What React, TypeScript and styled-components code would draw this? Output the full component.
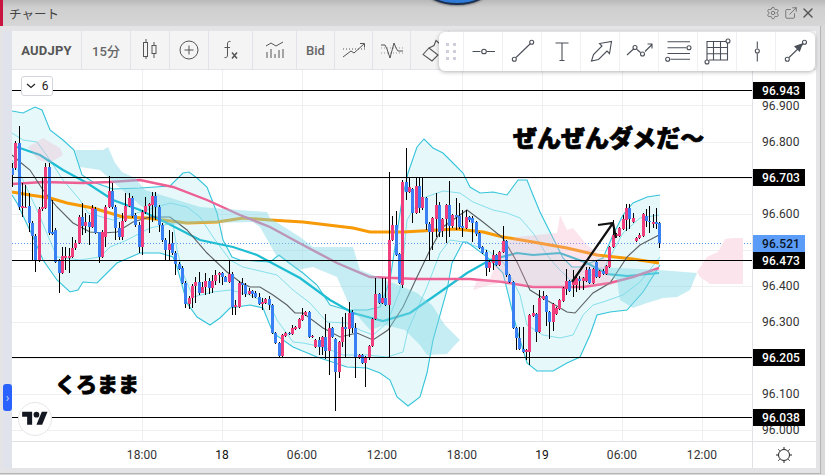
import React from "react";
import styled, { createGlobalStyle } from "styled-components";
import { ExternalLink, Settings, X } from "lucide-react";

const GlobalStyle = createGlobalStyle`
    html, body {
        margin: 0;
        padding: 0;
        overflow: hidden;
        background: #dcdcdc;
    }
    * {
        box-sizing: border-box;
    }
`;

// up(1)/down(0), body top, body bottom, wick top, wick bottom (all in page pixels)
type Candle = [number, number, number, number, number];
type Chunk = { start: number; rows: Candle[] };

const chunks: Chunk[] = [
    {
        start: 12,
        rows: [
            [0,168,175,163,187],[1,143,168,141,170],[0,143,207,126,210],[1,206,208,183,217],[1,207,208,185,208],
            [0,206,223,193,232],[0,223,236,221,260],[0,236,261,234,272],[1,209,261,207,262],[1,207,209,178,211],
            [1,167,208,163,209],[0,167,233,163,235],[0,232,234,200,235],[0,230,262,228,263],[0,261,273,259,293],
            [1,256,273,247,274],[1,256,258,247,270],[1,256,258,248,273],[1,248,257,237,258],[1,243,248,240,250],
            [1,217,243,215,244],[0,217,226,203,235],[1,222,226,213,233],[0,222,227,215,245],[1,208,227,205,228],
            [0,209,233,207,234],[0,232,257,232,263],[1,232,257,230,258],[1,207,237,205,247],[1,191,207,176,208],
            [0,191,207,183,209],[0,207,228,205,240],[0,228,237,222,240],[1,221,237,213,240],[1,206,221,193,222],
            [1,198,206,193,207],[0,198,216,196,218],[0,215,225,213,227],[0,225,247,222,253],[1,212,247,210,255],
            [1,206,212,197,214],[1,204,206,203,233],[1,196,205,192,222],[0,196,207,192,220],[0,207,225,205,232],
            [0,225,240,223,242],[0,240,250,238,260],[1,244,250,230,260],[0,243,253,232,255],
        ],
    },
    {
        start: 175.3,
        rows: [
            [0,253,264,251,275],[0,264,269,262,270],[0,268,283,266,284],[0,283,304,281,308],[1,298,304,296,309],
            [1,286,298,284,308],[1,282,286,277,303],[0,282,293,272,295],[1,287,293,282,292],[1,281,287,273,295],
            [0,281,288,278,294],[1,281,288,275,293],[1,275,281,270,285],[1,273,275,272,283],[0,273,277,272,285],
            [0,277,282,276,282],[1,274,282,260,283],[0,274,307,272,315],[1,305,307,300,315],[1,283,307,281,308],
            [0,283,285,278,295],[0,285,294,283,297],[1,291,294,288,295],[0,291,294,290,298],[0,293,297,291,298],
            [0,297,304,293,305],[1,302,304,298,310],[1,299,303,298,304],[0,299,305,296,310],[0,305,333,304,334],
            [0,333,343,332,344],[0,343,356,342,357],[1,335,356,334,357],[1,333,336,332,337],[0,333,334,332,335],
            [1,328,334,325,335],[1,327,329,326,330],[1,319,328,318,329],[1,315,320,308,321],[1,312,315,311,316],
            [0,312,337,311,338],[1,336,337,335,338],[1,340,347,339,348],[0,340,347,337,355],[1,337,347,336,355],
            [0,337,351,314,359],[1,328,351,323,375],[0,328,337,327,338],[0,339,372,338,411],[1,342,372,341,378],
            [1,327,342,317,347],[0,327,329,313,357],[1,313,329,302,337],[0,312,328,310,333],[0,328,358,323,378],
            [1,355,358,354,359],[0,355,363,354,364],[1,357,363,356,387],[1,346,358,345,360],[1,319,346,318,347],
            [1,294,319,278,320],[0,294,303,293,304],[1,298,303,278,304],[0,298,305,278,306],
        ],
    },
    {
        start: 389,
        rows: [
            [1,240,305,172,358],[1,225,240,216,241],[0,225,255,211,256],[0,254,283,253,284],[1,182,285,180,288],
            [0,182,192,148,200],[1,187,192,178,193],[0,189,213,188,223],[1,186,213,177,214],[0,186,208,177,213],
            [1,197,208,177,210],[0,198,224,197,230],[0,224,232,222,260],[1,218,232,217,250],[1,205,219,193,237],
            [0,205,232,202,237],[1,219,231,218,237],[1,205,219,204,243],[0,205,226,181,237],[1,215,226,214,228],
            [0,215,217,198,230],[0,216,227,203,229],[0,226,228,210,237],[1,217,228,210,229],[0,217,220,216,222],
            [0,218,223,216,242],[0,222,234,221,236],[0,233,248,232,249],[0,247,253,246,254],[0,252,268,250,276],
            [1,262,268,261,272],
        ],
    },
    {
        start: 492.7,
        rows: [
            [1,255,263,250,270],[0,255,265,254,266],[1,252,265,251,266],[1,241,252,226,253],[0,241,275,240,277],
            [0,275,282,274,283],[0,282,328,281,329],[0,328,338,327,350],[0,338,349,327,350],[0,349,352,327,353],
            [1,350,352,349,360],[1,315,352,314,365],[1,313,316,305,317],[0,314,332,313,342],[1,298,332,290,333],
            [1,296,299,291,300],[0,296,312,295,326],[0,312,322,311,339],[1,304,322,303,331],[1,308,314,307,315],
            [1,300,309,299,310],[1,288,301,287,302],[1,281,289,269,295],[0,281,291,280,292],[1,280,285,270,297],
            [1,278,285,277,292],[0,279,281,276,290],[1,278,281,277,290],[1,270,281,267,282],[0,269,283,267,284],
            [1,269,283,268,284],[0,262,277,261,278],[1,271,277,270,278],[0,271,274,269,275],[1,266,274,265,275],
            [1,247,267,246,268],[1,235,247,220,248],[1,234,236,233,237],[1,228,236,227,237],[1,219,229,215,230],
            [1,208,220,204,231],[0,208,219,204,229],[1,218,222,213,223],[1,238,241,237,242],[1,235,238,233,239],
            [1,214,236,213,237],[0,216,221,209,227],[0,221,222,206,233],[1,222,224,214,228],[0,222,224,208,229],
            [0,223,243,222,248],
        ],
    },
];

const bandUpper = "12,111 23,113 35,107 42,110 50,130 63,140 74,150 82,175 93,182 113,189 140,188 170,186 183,173 189,172 197,178 207,187 217,213 223,240 232,257 240,260 270,262 279,255 288,262 303,273 317,285 330,305 347,310 367,310 380,307 390,280 402,200 408,173 417,147 424,139 433,148 443,153 453,163 463,173 470,187 480,193 493,192 507,195 518,180 527,180 533,195 540,212 553,238 563,258 572,267 580,267 590,263 603,258 613,235 623,215 633,203 647,197 660,195";
const bandLower = "660,265 643,292 627,310 610,312 597,315 590,335 580,357 567,363 553,371 537,371 527,363 517,330 512,310 503,273 487,257 467,242 463,242 452,263 447,290 433,340 427,373 420,397 408,406 397,397 390,380 380,373 367,368 347,367 317,357 293,347 273,333 263,308 250,305 230,308 220,318 210,325 197,317 187,303 177,267 173,257 160,253 140,253 117,263 107,273 97,283 83,282 78,290 70,292 57,280 43,260 33,237 17,203 12,195";
const innerUpper = "12,133 23,140 37,142 50,160 63,180 80,200 88,213 113,220 140,212 170,203 187,207 200,217 213,237 230,260 243,267 277,275 293,290 310,303 327,322 347,323 360,330 373,335 387,323 400,290 407,220 413,210 423,198 443,191 460,193 473,202 493,210 507,213 520,218 533,233 547,255 557,267 570,280 587,277 603,270 623,233 640,218 659,215";
const innerLower = "12,160 23,180 37,210 57,257 80,260 100,257 110,247 127,240 150,228 173,223 177,250 183,273 193,297 213,292 230,290 250,295 270,305 277,320 293,342 303,343 323,347 343,355 367,355 387,357 403,352 408,330 427,287 440,253 450,240 463,242 487,250 503,262 520,295 527,325 543,335 560,338 573,335 583,315 593,305 603,302 623,295 640,282 660,257";
const maThin = "12,155 20,162 30,170 43,190 57,207 73,223 90,232 103,233 117,232 133,222 150,217 170,217 187,230 207,253 227,272 240,282 250,287 260,287 273,295 287,305 295,313 303,313 323,328 340,337 357,333 373,340 388,330 403,307 417,277 430,250 443,227 467,210 483,222 503,238 517,262 530,290 543,298 567,312 575,313 593,293 610,283 627,257 640,245 659,235";
const maOrange = "12,192 30,195 50,198 67,203 93,208 123,217 147,218 187,223 217,222 243,218 270,220 303,222 353,228 370,232 403,232 457,229 483,232 503,237 533,242 550,245 567,248 597,255 633,259 659,263";
const maPink = "12,184 43,182 83,183 110,182 140,180 173,187 207,200 240,215 270,227 303,245 337,263 370,277 417,279 470,279 503,282 533,287 583,287 610,283 633,277 659,268";
const maTeal = "17,147 40,155 63,170 87,183 113,200 140,210 167,223 200,240 233,247 257,255 270,262 300,278 330,300 353,313 383,321 410,313 443,290 467,273 490,260 517,253 533,255 560,253 587,263 607,274 627,276 659,273";

const cloudBlue = "75,150 103,150 108,147 115,163 122,172 135,178 145,190 200,207 267,212 270,218 300,237 313,247 353,247 360,270 403,287 417,293 432,305 445,325 460,340 455,345 447,354 427,355 420,345 405,330 385,325 370,330 350,307 337,277 313,267 297,270 280,257 277,257 260,227 253,222 210,223 167,225 140,205 113,182 100,170 80,167";
const cloudBlueRight = "597,267 659,270 697,273 690,290 677,297 663,298 647,303 633,308 620,300 617,280";
const cloudPinkLeft = "28,147 43,138 60,148 63,155 50,163 38,160";
const cloudPinkMid = "473,290 477,280 490,279 503,243 517,237 537,235 557,233 560,215 567,230 573,228 587,245 607,260 612,285 560,287 533,287 503,282 490,285";
const cloudPinkRight = "697,272 707,257 718,252 725,239 733,238 743,238 743,284 710,284 700,277";

const levelLines = [90.5, 177.5, 260.5, 357.5, 417.5];
const gridX = [142, 222, 302, 382, 462, 542, 622, 702];
const gridY = [105, 142, 178, 214, 250, 286, 322, 358, 394, 430];
// rows whose tick sits behind a price badge stay empty
const priceTicks = ["96.900", "96.800", "", "96.600", "", "96.400", "96.300", "", "96.100", "96.000"];
const priceBadges = [
    { label: "96.943", y: 82, active: false },
    { label: "96.703", y: 169, active: false },
    { label: "96.521", y: 235, active: true },
    { label: "96.473", y: 252, active: false },
    { label: "96.205", y: 349, active: false },
    { label: "96.038", y: 409, active: false },
];
const timeLabels = [
    { label: "18:00", day: false },
    { label: "18", day: true },
    { label: "06:00", day: false },
    { label: "12:00", day: false },
    { label: "18:00", day: false },
    { label: "19", day: true },
    { label: "06:00", day: false },
    { label: "12:00", day: false },
];

function Candles() {
    return (
        <g>
            {chunks.map((chunk) =>
                chunk.rows.map(([up, top, bottom, high, low], i) => {
                    const x = Math.round(chunk.start + i * 3.333);
                    return (
                        <g key={`${chunk.start}-${i}`}>
                            <rect x={x} y={high} width={1} height={low - high} fill="#000" />
                            <rect x={x - 1} y={top} width={3} height={bottom - top} fill={up ? "#f03f7c" : "#3a80f5"} />
                        </g>
                    );
                })
            )}
        </g>
    );
}

function ChartDrawing() {
    return (
        <PlotSvg viewBox="12 70 740 371" width={740} height={371}>
            {gridX.map((x) => <line key={x} x1={x + 0.5} x2={x + 0.5} y1={70} y2={441} stroke="#efeff2" />)}
            {gridY.map((y) => <line key={y} x1={12} x2={752} y1={y + 0.5} y2={y + 0.5} stroke="#efeff2" />)}

            <polygon points={`${bandUpper} ${bandLower}`} fill="#e6f8fa" />
            <polyline points={innerUpper} fill="none" stroke="#86dfec" strokeWidth={1} />
            <polyline points={innerLower} fill="none" stroke="#86dfec" strokeWidth={1} />
            <polyline points={bandUpper} fill="none" stroke="#35c4da" strokeWidth={1.1} />
            <polyline points={bandLower} fill="none" stroke="#35c4da" strokeWidth={1.1} />

            <line x1={12} x2={752} y1={243.5} y2={243.5} stroke="#5b94ee" strokeDasharray="1 2" />
            <polyline points={maOrange} fill="none" stroke="#f79a06" strokeWidth={3} />
            <polyline points={maTeal} fill="none" stroke="#1fbdd3" strokeWidth={2.2} />
            <polyline points={maPink} fill="none" stroke="#ee5f94" strokeWidth={2.4} />
            <polyline points={maThin} fill="none" stroke="#5a5f60" strokeWidth={1.1} />

            {/* the clouds lie over the averages and dim them */}
            <polygon points={cloudPinkLeft} fill="#f3a9c6" opacity={0.28} />
            <polygon points={cloudBlue} fill="#7fd6e4" opacity={0.45} />
            <polygon points={cloudBlueRight} fill="#7fd6e4" opacity={0.45} />
            <polygon points={cloudPinkMid} fill="#f5a9c5" opacity={0.3} />
            <polygon points={cloudPinkRight} fill="#fce4ec" />

            <Candles />

            {levelLines.map((y) => <line key={y} x1={12} x2={752} y1={y} y2={y} stroke="#000" />)}

            <path d="M572 282 L613 223 M598 225 L613 223 L616 238" fill="none" stroke="#111" strokeWidth={2.2} />
        </PlotSvg>
    );
}

const iconProps = { fill: "none", stroke: "#555", strokeWidth: 1 };

function IconCandles() {
    return (
        <svg width="22" height="24" viewBox="0 0 22 24" {...iconProps}>
            <path d="M7 1v20M15 4v16" />
            <rect x="4.5" y="4.5" width="4" height="14" fill="#f4f4f4" />
            <rect x="13" y="7.5" width="4" height="8" fill="#f4f4f4" />
        </svg>
    );
}

function IconAdd() {
    return (
        <svg width="20" height="20" viewBox="0 0 20 20" {...iconProps}>
            <circle cx="10" cy="10" r="9" />
            <path d="M10 5.5v9M5.5 10h9" />
        </svg>
    );
}

function IconFx() {
    return (
        <svg width="18" height="20" viewBox="0 0 18 20" {...iconProps}>
            <path d="M8.5 1.5C6.5 1 5.5 2 5.5 4v11c0 2-1 3-3 2.5M2.5 7.5h5.5" />
            <path d="M10 12.5l5 6M15 12.5l-5 6" strokeWidth={1.5} />
        </svg>
    );
}

function IconIndicators() {
    return (
        <svg width="20" height="20" viewBox="0 0 20 20" {...iconProps}>
            <path d="M1 6l5-3 5 3 7-4" />
            <path d="M2 12v6M6 9v9M10 14v4M14 10v8M18 9v9" />
        </svg>
    );
}

function IconTrend() {
    return (
        <svg width="24" height="18" viewBox="0 0 24 18" {...iconProps}>
            <path d="M1 8h22" strokeDasharray="1 2" />
            <path d="M1 16l8-6 3 2 10-9M18 2.5h4.5v4" />
        </svg>
    );
}

function IconWave() {
    return (
        <svg width="24" height="20" viewBox="0 0 24 20" {...iconProps}>
            <path d="M1 8h22M1 13h22" strokeDasharray="1 2" stroke="#999" />
            <path d="M1 5h4l2 4 3 9 4-15 2 5 2 3h5" />
        </svg>
    );
}

function IconBrush() {
    return (
        <svg width="20" height="24" viewBox="0 0 20 24" {...iconProps}>
            <path d="M3 16.5l6-6.5 9 7-6 6z" strokeWidth={1.1} />
            <path d="M9 10l5-2.5 2-5 3.5 3" strokeWidth={1.1} />
        </svg>
    );
}

function IconSun() {
    return (
        <svg width="18" height="18" viewBox="0 0 18 18" fill="none" stroke="#222" strokeWidth="1">
            <circle cx="9" cy="9" r="5.5" />
            <path d="M9 1v2M9 15v2M1 9h2M15 9h2M3.3 3.3l1.4 1.4M13.3 13.3l1.4 1.4M3.3 14.7l1.4-1.4M13.3 4.7l1.4-1.4" />
        </svg>
    );
}

const toolStroke = { fill: "none", stroke: "#4a4f58", strokeWidth: 1.1 };

function ToolIcon({ children }: { children: React.ReactNode }) {
    return <svg width="39" height="39" viewBox="0 0 39 39" {...toolStroke}>{children}</svg>;
}

const drawingTools: React.ReactNode[] = [
    <ToolIcon key="h"><path d="M8.5 19.5h8M23 19.5h8" /><circle cx="20" cy="19.5" r="2.3" /></ToolIcon>,
    <ToolIcon key="line"><path d="M13 25.5l14-13.5" /><circle cx="11.3" cy="27.3" r="2" /><circle cx="28.7" cy="10.3" r="2" /></ToolIcon>,
    <ToolIcon key="text"><path d="M13.5 11h13M20 11v17.5M17.5 28.5h5" /></ToolIcon>,
    <ToolIcon key="arrow"><path d="M10.5 29l2-6.5 8.5-8.5-2.5-2.5 12-2-2 12-2.5-2.5-8.5 8.5z" /></ToolIcon>,
    <ToolIcon key="poly"><path d="M7 23l6.5-6M17 17.5l3.5 3M25 19.5l7-7M27.5 12h4.5v4.5" /><circle cx="15" cy="15.5" r="2" /><circle cx="22.5" cy="22" r="2" /></ToolIcon>,
    <ToolIcon key="channel"><path d="M8.5 9.7h22.5M8.5 15.7h19M8.5 21.5h22.5M11.5 27.3h19.5" /><circle cx="30" cy="15.7" r="2" /><circle cx="8.7" cy="27.3" r="2" /></ToolIcon>,
    <ToolIcon key="grid"><path d="M9 28V9.5h19M15.5 9.5V28M22.5 9.5V28M29.5 11v17H11M9 15.5h20.5M9 21.7h20.5" /><circle cx="30" cy="9" r="2" /><circle cx="9" cy="30" r="2" /></ToolIcon>,
    <ToolIcon key="vertical"><path d="M20.3 9.5v7M20.3 21.5v8" /><circle cx="20.3" cy="19" r="2" /></ToolIcon>,
    <ToolIcon key="ray"><path d="M13 25.5l14-13.5" /><circle cx="11.3" cy="27.3" r="2" /><circle cx="28.5" cy="10.3" r="2" /><path d="M26 12l-7 2.5 4.5 4.5z" fill="#4a4f58" /></ToolIcon>,
];

export default function App() {
    return (
        <Page>
            <GlobalStyle />
            <TitleBar>
                <TitleText>{"チャート"}</TitleText>
                <TitleActions>
                    <Settings size={14} strokeWidth={1.4} />
                    <ExternalLink size={14} strokeWidth={1.4} />
                    <X size={16} strokeWidth={2} />
                </TitleActions>
            </TitleBar>
            <BadgePeek />
            <Panel>
                <LeftRail>
                    <RailToggle>{"›"}</RailToggle>
                </LeftRail>
                <Content>
                    <Toolbar>
                        <ToolCell $w={70}><Symbol>{"AUDJPY"}</Symbol></ToolCell>
                        <ToolCell $w={49}><ToolLabel>{"15分"}</ToolLabel></ToolCell>
                        <ToolCell $w={39}><IconCandles /></ToolCell>
                        <ToolCell $w={39}><IconAdd /></ToolCell>
                        <ToolCell $w={44}><IconFx /></ToolCell>
                        <ToolCell $w={44}><IconIndicators /></ToolCell>
                        <ToolCell $w={38}><ToolLabel>{"Bid"}</ToolLabel></ToolCell>
                        <ToolCell $w={38}><IconTrend /></ToolCell>
                        <ToolCell $w={38}><IconWave /></ToolCell>
                        <ToolCell $w={38}><IconBrush /></ToolCell>
                    </Toolbar>
                    <ChartRow>
                        <Plot>
                            <ChartDrawing />
                            <CollapseChip>
                                <svg width="10" height="6" viewBox="0 0 10 6" fill="none" stroke="#222" strokeWidth="1.2"><path d="M1 1l4 3.5L9 1" /></svg>
                                {"6"}
                            </CollapseChip>
                            <Remark $x={501} $y={53} $size={24}>{"ぜんぜんダメだ〜"}</Remark>
                            <Remark $x={43} $y={301} $size={21}>{"くろまま"}</Remark>
                            <LogoBadge>
                                <svg width="26" height="20" viewBox="0 0 36 28" fill="#131722">
                                    <path d="M14 22H7V11H0V4h14v18z" />
                                    <path d="M28 22h-8l7.5-18h8L28 22z" />
                                    <circle cx="20" cy="8" r="4" />
                                </svg>
                            </LogoBadge>
                        </Plot>
                        <PriceAxis>
                            {priceTicks.map((tick, i) => <PriceTick key={i}>{tick}</PriceTick>)}
                            {priceBadges.map((badge) => (
                                <PriceBadge key={badge.label} $y={badge.y - 70} $active={badge.active}>{badge.label}</PriceBadge>
                            ))}
                        </PriceAxis>
                    </ChartRow>
                    <TimeRow>
                        <TimeAxis>
                            {timeLabels.map((item, i) => (
                                <TimeLabel key={i} $day={item.day}>{item.label}</TimeLabel>
                            ))}
                        </TimeAxis>
                        <AxisCorner><IconSun /></AxisCorner>
                    </TimeRow>
                </Content>
                <DrawingBar>
                    <DragHandle>
                        {Array.from({ length: 6 }).map((_, i) => <HandleDot key={i} />)}
                    </DragHandle>
                    {drawingTools.map((tool, i) => <DrawingCell key={i}>{tool}</DrawingCell>)}
                </DrawingBar>
            </Panel>
        </Page>
    );
}

const Page = styled.div`
    position: relative;
    width: 825px;
    height: 475px;
    display: flex;
    flex-direction: column;
    overflow: hidden;
    background: #d9d9d9;
    font-family: Roboto, "Noto Sans CJK JP", sans-serif;
`;

const TitleBar = styled.div`
    height: 26px;
    display: flex;
    align-items: center;
    justify-content: space-between;
    padding: 0 9px 0 9px;
    border-left: 3px solid #c9143f;
    background: linear-gradient(#b9b9b9 0, #cfcfcf 8px, #d6d6d6 100%);
`;

const TitleText = styled.span`
    margin-left: -3px;
    font-family: "Noto Sans CJK JP", sans-serif;
    font-size: 12.5px;
    color: #444;
`;

const TitleActions = styled.div`
    display: flex;
    align-items: center;
    gap: 4px;
    color: #666;

    svg:last-child {
        color: #555;
        margin-left: -2px;
    }
`;

const BadgePeek = styled.div`
    position: absolute;
    left: 425px;
    top: -27px;
    width: 64px;
    height: 32px;
    border-radius: 50%;
    background: #2f7ad6;
    border: 2px solid #1d2f4f;
    box-shadow: 0 1px 2px rgba(0, 0, 0, 0.35);
`;

const Panel = styled.div`
    position: relative;
    width: 821px;
    height: 448px;
    display: flex;
    padding: 5px 4px 5px 3px;
    background: #e4e4e7;
    border-right: 1px solid #b4b4b4;
    border-bottom: 1px solid #b4b4b4;
`;

const LeftRail = styled.div`
    position: relative;
    width: 9px;
    background: #e0e3ec;
`;

const RailToggle = styled.div`
    position: absolute;
    left: 0;
    top: 353px;
    width: 9px;
    height: 27px;
    display: flex;
    align-items: center;
    justify-content: center;
    border-radius: 3px;
    background: #2962ff;
    color: #cfdcff;
    font-size: 12px;
`;

const Content = styled.div`
    width: 804px;
    display: flex;
    flex-direction: column;
    background: #fff;
`;

const Toolbar = styled.div`
    height: 39px;
    flex: none;
    display: flex;
    overflow: hidden;
    background: #f4f4f4;
    border-bottom: 1px solid #e2e2ea;
`;

const ToolCell = styled.div<{ $w: number }>`
    width: ${(p) => p.$w}px;
    flex: none;
    display: flex;
    align-items: center;
    justify-content: center;
    border-right: 1px solid #e2e2ea;
`;

const Symbol = styled.span`
    font-size: 13px;
    font-weight: 700;
    letter-spacing: 0.2px;
    color: #555;
`;

const ToolLabel = styled.span`
    font-size: 13px;
    font-weight: 500;
    color: #666;
`;

const ChartRow = styled.div`
    height: 371px;
    flex: none;
    display: flex;
`;

const Plot = styled.div`
    position: relative;
    width: 740px;
    height: 371px;
    overflow: hidden;
`;

const PlotSvg = styled.svg`
    display: block;
`;

const CollapseChip = styled.div`
    position: absolute;
    left: 9px;
    top: 6px;
    width: 32px;
    height: 20px;
    display: flex;
    align-items: center;
    justify-content: center;
    gap: 6px;
    border: 1px solid #d4d4dc;
    border-radius: 3px;
    background: #fff;
    font-size: 12px;
    color: #222;
`;

const Remark = styled.div<{ $x: number; $y: number; $size: number }>`
    position: absolute;
    left: ${(p) => p.$x}px;
    top: ${(p) => p.$y}px;
    font-family: "Noto Sans CJK JP", sans-serif;
    font-size: ${(p) => p.$size}px;
    font-weight: 900;
    line-height: 1.2;
    white-space: nowrap;
    color: #000;
    -webkit-text-stroke: 0.7px #000;
`;

const LogoBadge = styled.div`
    position: absolute;
    left: 6px;
    top: 332px;
    width: 34px;
    height: 34px;
    display: flex;
    align-items: center;
    justify-content: center;
    border: 1px solid #e6e6e6;
    border-radius: 50%;
    background: #fff;
`;

const PriceAxis = styled.div`
    position: relative;
    width: 64px;
    padding-top: 18px;
    border-left: 1px solid #e2e2e6;
`;

const PriceTick = styled.div`
    height: 36px;
    padding-left: 9px;
    font-size: 12px;
    line-height: 36px;
    letter-spacing: 0.1px;
    color: #333;
`;

const PriceBadge = styled.div<{ $y: number; $active: boolean }>`
    position: absolute;
    left: 0;
    top: ${(p) => p.$y}px;
    width: 52px;
    height: 17px;
    padding-left: 9px;
    font-size: 12px;
    font-weight: 500;
    line-height: 18px;
    letter-spacing: 0.1px;
    background: ${(p) => (p.$active ? "#5b9cf8" : "#000")};
    color: ${(p) => (p.$active ? "#0a1526" : "#fff")};
`;

const TimeRow = styled.div`
    flex: 1;
    display: flex;
    border-top: 1px solid #e2e2e6;
`;

const TimeAxis = styled.div`
    width: 740px;
    display: flex;
    align-items: center;
    padding-left: 90px;
`;

const TimeLabel = styled.span<{ $day: boolean }>`
    width: 80px;
    text-align: center;
    font-size: 12px;
    letter-spacing: 0.1px;
    color: ${(p) => (p.$day ? "#111" : "#333")};
`;

const AxisCorner = styled.div`
    width: 64px;
    display: flex;
    align-items: center;
    justify-content: center;
    padding-right: 2px;
    border-left: 1px solid #e2e2e6;
`;

const DrawingBar = styled.div`
    position: absolute;
    left: 439px;
    top: 6px;
    width: 376px;
    height: 39px;
    display: flex;
    border-radius: 6px;
    background: #fff;
    box-shadow: 0 1px 4px rgba(0, 0, 0, 0.3);
`;

const DragHandle = styled.div`
    width: 25px;
    flex: none;
    display: grid;
    grid-template-columns: 3px 3px;
    grid-auto-rows: 3px;
    gap: 4px 4px;
    align-content: center;
    justify-content: center;
    border-right: 1px solid #f0f0f4;
`;

const HandleDot = styled.span`
    background: #cfcfdc;
`;

const DrawingCell = styled.div`
    width: 39px;
    flex: none;
    border-right: 1px solid #f0f0f4;

    &:last-child {
        border-right: none;
    }

    svg {
        display: block;
    }
`;
